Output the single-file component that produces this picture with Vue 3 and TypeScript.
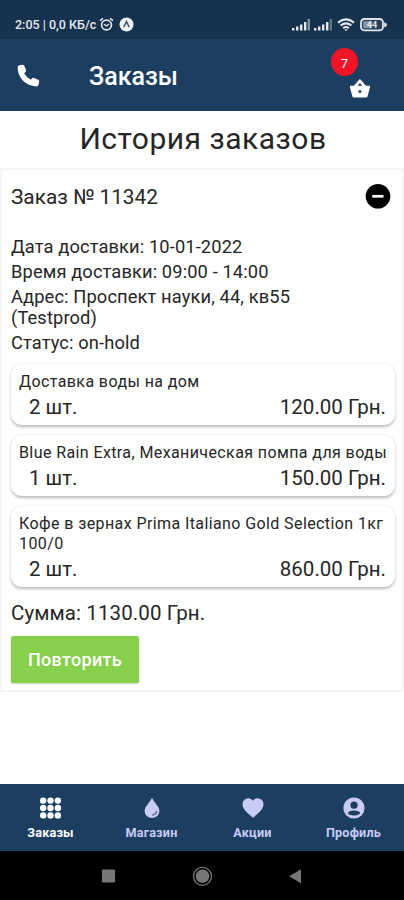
<script setup lang="ts">
interface OrderItem {
  name: string
  qty: string
  price: string
}

interface Tab {
  id: string
  label: string
}

const details: string[] = [
  'Дата доставки: 10-01-2022',
  'Время доставки: 09:00 - 14:00',
  'Адрес: Проспект науки, 44, кв55 (Testprod)',
  'Статус: on-hold',
]

const items: OrderItem[] = [
  { name: 'Доставка воды на дом', qty: '2 шт.', price: '120.00 Грн.' },
  { name: 'Blue Rain Extra, Механическая помпа для воды', qty: '1 шт.', price: '150.00 Грн.' },
  { name: 'Кофе в зернах Prima Italiano Gold Selection 1кг 100/0', qty: '2 шт.', price: '860.00 Грн.' },
]

const tabs: Tab[] = [
  { id: 'orders', label: 'Заказы' },
  { id: 'shop', label: 'Магазин' },
  { id: 'promo', label: 'Акции' },
  { id: 'profile', label: 'Профиль' },
]

const dots: number[] = [3.6, 11, 18.4]
</script>

<template>
  <div class="screen">
    <div class="status">
      <span class="status-text">2:05 | 0,0 КБ/с</span>
      <svg class="alarm" width="15" height="15" viewBox="0 0 15 15" fill="none" stroke="#dfe5ec">
        <circle cx="7.5" cy="8" r="4.9" stroke-width="1.7" />
        <path d="M1 3.6 4 1.3M14 3.6 11 1.3" stroke-width="1.6" />
        <path d="M5 7.2 7.5 9 10 7" stroke-width="1.3" />
      </svg>
      <svg class="app-mark" width="15" height="15" viewBox="0 0 15 15">
        <circle cx="7.5" cy="7.5" r="7" fill="#eef1f5" />
        <path d="M4.8 10.2 7.5 4.6 10.2 10.2" fill="none" stroke="#45586f" stroke-width="1.5" />
      </svg>
      <span class="grow"></span>
      <svg v-for="n in 2" :key="n" class="signal" width="19" height="13" viewBox="0 0 19 13">
        <path d="M0 10h2.4v2.5H0zM4 8.5h2.4v4H4zM8 6.5h2.4v6H8zM12 4h2.4v8.5H12z" fill="#e4e9ef" />
        <path d="M15.6 1H18v11.5h-2.4z" :fill="n === 1 ? '#8394a7' : '#61758b'" />
      </svg>
      <svg class="wifi" width="18" height="14" viewBox="0 0 18 14" fill="none" stroke="#e4e9ef" stroke-width="2">
        <path d="M1 4.6Q9-1.8 17 4.6M3.6 7.5Q9 3.2 14.4 7.5M6.2 10.1Q9 8 11.8 10.1" />
        <path d="M7.3 11.3h3.4L9 13.2z" fill="#e4e9ef" stroke="none" />
      </svg>
      <span class="battery">
        <svg width="27" height="14" viewBox="0 0 27 14">
          <rect x="1" y="1" width="22" height="11.4" rx="3.4" fill="#294058" stroke="#dfe5ec" stroke-width="1.8" />
          <rect x="3.2" y="3.2" width="9" height="7" rx="1" fill="#8596a8" />
          <path d="M24.2 4.2Q27 4.8 27 6.8T24.2 9.3z" fill="#dfe5ec" />
        </svg>
        <span class="battery-value">44</span>
      </span>
    </div>

    <header class="header">
      <svg class="phone" width="24" height="24" viewBox="0 0 24 24" fill="#fff">
        <path d="M3.6 1.2 6.4.8Q7.8.7 8.4 2L10 5.9Q10.4 7.1 9.4 8L8.2 9.2Q10.4 13.4 14.8 15.7L16 14.5Q16.9 13.5 18.1 14L22.2 15.7Q23.4 16.3 23.2 17.6L22.5 20.7Q22.1 22.4 20.4 22.4C9.9 22.2 1.7 13.9 1.6 3.6Q1.6 1.7 3.6 1.2Z" />
      </svg>
      <h1 class="header-title">Заказы</h1>
      <div class="cart">
        <svg width="22" height="20" viewBox="0 0 22 20">
          <path d="M5.2 8.6 10.9 1.8 16.7 8.6" fill="none" stroke="#fff" stroke-width="2.8" stroke-linejoin="round" />
          <path d="M1.4 6.8H20.4Q21.2 7 21 8.2L18.5 17.5Q18.2 18.5 17.2 18.5H4.7Q3.7 18.5 3.4 17.5L.9 8.2Q.8 7 1.4 6.8Z" fill="#fff" />
          <circle cx="10.9" cy="12.4" r="1.5" fill="#1c3e61" />
        </svg>
        <span class="badge">7</span>
      </div>
    </header>

    <main class="main">
      <h2 class="title">История заказов</h2>
      <section class="order">
        <div class="order-head">
          <span class="order-number">Заказ № 11342</span>
          <svg width="26" height="26" viewBox="0 0 26 26">
            <circle cx="13" cy="12.3" r="12.3" fill="#000" />
            <path d="M7.3 12.3h11.2" stroke="#fff" stroke-width="2.7" />
          </svg>
        </div>
        <div class="details">
          <p v-for="line in details" :key="line" class="detail">{{ line }}</p>
        </div>
        <div class="items">
          <article v-for="item in items" :key="item.name" class="item">
            <div class="item-name">{{ item.name }}</div>
            <div class="item-row">
              <span>{{ item.qty }}</span>
              <span>{{ item.price }}</span>
            </div>
          </article>
        </div>
        <p class="sum">Сумма: 1130.00 Грн.</p>
        <button class="repeat" type="button">Повторить</button>
      </section>
    </main>

    <nav class="tabs">
      <div v-for="tab in tabs" :key="tab.id" class="tab" :class="{ active: tab.id === 'orders' }">
        <svg width="22" height="22" viewBox="0 0 22 22" fill="currentColor">
          <template v-if="tab.id === 'orders'">
            <template v-for="y in dots" :key="y">
              <circle v-for="x in dots" :key="x" :cx="x - 0.5" :cy="y" r="3.2" />
            </template>
          </template>
          <template v-else-if="tab.id === 'shop'">
            <path d="M11 .8C13 5.5 18.4 9.4 18.4 14A7.4 7 0 0 1 3.6 14C3.6 9.4 9 5.5 11 .8Z" />
            <path d="M11.2 18.1Q15.1 17.6 15.8 14.2" fill="none" stroke="#51628b" stroke-width="1.3" />
          </template>
          <path v-else-if="tab.id === 'promo'" d="M11 20.8 9.5 19.5C4 14.6.5 11.5.5 7.2A5.8 5.8 0 0 1 6.3 1.3C8.2 1.3 10 2.2 11 3.7 12 2.2 13.8 1.3 15.7 1.3A5.8 5.8 0 0 1 21.5 7.2C21.5 11.5 18 14.6 12.5 19.5Z" />
          <template v-else>
            <circle cx="11" cy="11" r="10.6" />
            <circle cx="11" cy="8.2" r="3.6" fill="#1c3e61" />
            <ellipse cx="11" cy="16" rx="6" ry="2.5" fill="#1c3e61" />
          </template>
        </svg>
        <span class="tab-label">{{ tab.label }}</span>
      </div>
    </nav>

    <div class="system">
      <svg width="404" height="48" viewBox="0 0 404 48">
        <rect x="102" y="18.5" width="13" height="13" rx="1" fill="#777" />
        <circle cx="202.5" cy="25.3" r="9" fill="none" stroke="#777" stroke-width="1.3" />
        <circle cx="202.5" cy="25.3" r="6.8" fill="#777" />
        <path d="M289 25.3 301 18.3V32.2Z" fill="#777" />
      </svg>
    </div>
  </div>
</template>

<style>
body {
  margin: 0;
  background: #fff;
}
</style>

<style scoped>
.screen {
  width: 404px;
  height: 900px;
  display: flex;
  flex-direction: column;
  overflow: hidden;
  background: #fff;
  color: #262626;
  font-family: Roboto, "Noto Sans", sans-serif;
}
h1, h2, p {
  margin: 0;
  font-weight: 400;
}
.status {
  height: 39px;
  box-sizing: border-box;
  padding: 10px 17px 0 15px;
  display: flex;
  align-items: center;
  background: #17324f;
  color: #e4e9ef;
}
.status-text {
  font-size: 12.5px;
  font-weight: 500;
  white-space: nowrap;
}
.alarm { margin-left: 3px; }
.app-mark { margin-left: 5px; }
.grow { flex: 1; }
.signal { margin-right: 3px; }
.wifi { margin: 0 5px 0 1px; }
.battery {
  position: relative;
  display: flex;
}
.battery-value {
  position: absolute;
  left: 0;
  top: 1px;
  width: 24px;
  text-align: center;
  font-size: 9px;
  line-height: 12px;
  font-weight: 700;
}
.header {
  height: 72px;
  box-sizing: border-box;
  padding: 0 33px 0 16px;
  display: flex;
  align-items: center;
  background: #1c3e61;
  color: #fff;
}
.phone {
  margin-top: 2px;
}
.header-title {
  flex: 1;
  margin: 2px 0 0 49px;
  font-size: 25px;
  font-weight: 500;
}
.cart {
  position: relative;
  display: flex;
  margin-top: 27px;
}
.badge {
  position: absolute;
  left: -18px;
  top: -31px;
  width: 27px;
  height: 28px;
  border-radius: 50%;
  background: #f01526;
  font-size: 13px;
  line-height: 31px;
  text-align: center;
}
.main {
  flex: 1;
}
.title {
  height: 57px;
  line-height: 56px;
  font-size: 30px;
  letter-spacing: 0.5px;
  text-align: center;
  padding-left: 2px;
}
.order {
  height: 524px;
  box-sizing: border-box;
  border: 2px solid #f5f5f5;
  padding: 0 8px 0 9px;
}
.order-head {
  height: 53px;
  display: flex;
  align-items: center;
  justify-content: space-between;
  padding-right: 3px;
}
.order-number {
  font-size: 20.8px;
}
.details {
  display: flex;
  flex-direction: column;
  gap: 4px;
  padding-top: 13px;
}
.detail {
  width: 300px;
  font-size: 18.3px;
  line-height: 21px;
  letter-spacing: 0.12px;
}
.items {
  display: flex;
  flex-direction: column;
  gap: 10px;
  margin: 11px -1px 0 0;
}
.item {
  box-sizing: border-box;
  padding: 8px 9px 3px 8px;
  border-radius: 11px;
  background: #fff;
  box-shadow: 0 1.5px 3px rgba(0, 0, 0, 0.27);
}
.item-name {
  margin-right: -5px;
  font-size: 16px;
  line-height: 20px;
  letter-spacing: 0.4px;
}
.item-row {
  display: flex;
  justify-content: space-between;
  margin-top: 1px;
  padding-left: 10px;
  font-size: 20.5px;
  line-height: 29px;
}
.sum {
  margin-top: 14px;
  font-size: 20.5px;
  line-height: 24px;
  letter-spacing: 0.1px;
}
.repeat {
  display: block;
  width: 128px;
  height: 47px;
  margin-top: 11px;
  padding: 0;
  border: 0;
  border-radius: 2px;
  background: #86d04c;
  box-shadow: 0 1px 2px rgba(0, 0, 0, 0.2);
  color: #fff;
  font-family: inherit;
  font-size: 18px;
  font-weight: 500;
  letter-spacing: 0.3px;
}
.tabs {
  height: 67px;
  display: grid;
  grid-template-columns: repeat(4, 101px);
  background: #1c3e61;
}
.tab {
  display: flex;
  flex-direction: column;
  align-items: center;
  padding-top: 13px;
  color: #c8ccf5;
}
.tab.active {
  color: #fff;
}
.tab-label {
  margin-top: 6px;
  font-size: 12.6px;
  line-height: 16px;
  font-weight: 700;
  letter-spacing: 0.2px;
}
.system {
  height: 49px;
  background: #000;
}
</style>
